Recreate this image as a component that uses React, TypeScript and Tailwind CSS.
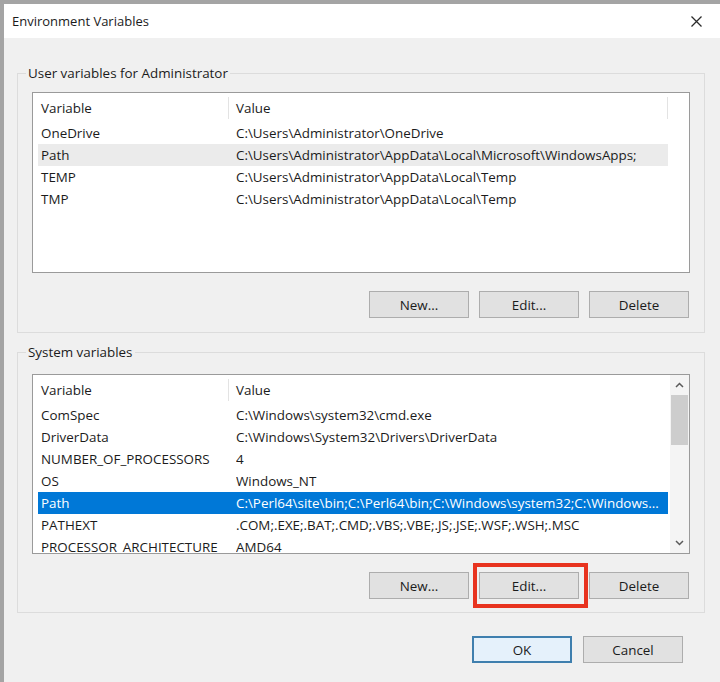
import React from 'react'

const userVars = [
  { name: 'OneDrive', value: 'C:\\Users\\Administrator\\OneDrive' },
  { name: 'Path', value: 'C:\\Users\\Administrator\\AppData\\Local\\Microsoft\\WindowsApps;' },
  { name: 'TEMP', value: 'C:\\Users\\Administrator\\AppData\\Local\\Temp' },
  { name: 'TMP', value: 'C:\\Users\\Administrator\\AppData\\Local\\Temp' },
]

const systemVars = [
  { name: 'ComSpec', value: 'C:\\Windows\\system32\\cmd.exe' },
  { name: 'DriverData', value: 'C:\\Windows\\System32\\Drivers\\DriverData' },
  { name: 'NUMBER_OF_PROCESSORS', value: '4' },
  { name: 'OS', value: 'Windows_NT' },
  { name: 'Path', value: 'C:\\Perl64\\site\\bin;C:\\Perl64\\bin;C:\\Windows\\system32;C:\\Windows...' },
  { name: 'PATHEXT', value: '.COM;.EXE;.BAT;.CMD;.VBS;.VBE;.JS;.JSE;.WSF;.WSH;.MSC' },
  { name: 'PROCESSOR_ARCHITECTURE', value: 'AMD64' },
]

function Button({ label, primary }: { label: string; primary?: boolean }) {
  return (
    <button
      className={
        primary
          ? 'w-[100px] h-[27px] border-2 border-[#3f7fae] bg-[#e5f1fb] text-[#1b1b1b] flex items-center justify-center'
          : 'w-[100px] h-[27px] border border-[#adadad] bg-[#e1e1e1] text-[#1b1b1b] flex items-center justify-center'
      }
    >
      {label}
    </button>
  )
}

function Header({ endLine }: { endLine?: boolean }) {
  return (
    <div className="h-[29px] flex items-center ml-[5px] mr-[2px] shrink-0">
      <div className="w-[190px] pl-[3px]">Variable</div>
      <div className="w-px h-[22px] bg-[#e3e3e3]" />
      <div className="flex-1 pl-[7px]">Value</div>
      {endLine && <div className="w-px h-[22px] bg-[#e3e3e3]" />}
    </div>
  )
}

type Row = { name: string; value: string }

function Rows({ rows, selected, active }: { rows: Row[]; selected: number; active?: boolean }) {
  return (
    <>
      {rows.map((r, i) => {
        const sel = i === selected
        const cls = sel
          ? active
            ? 'bg-[#0078d7] text-white'
            : 'bg-[#ebebeb]'
          : ''
        return (
          <div key={r.name} className={'h-[22px] flex items-center ml-[5px] mr-[2px] shrink-0 whitespace-nowrap ' + cls}>
            <div className="w-[198px] pl-[3px] overflow-hidden">{r.name}</div>
            <div className="flex-1 overflow-hidden">{r.value}</div>
          </div>
        )
      })}
    </>
  )
}

function Chevron({ up }: { up?: boolean }) {
  return (
    <svg width="9" height="6" viewBox="0 0 9 6" fill="none">
      <path
        d={up ? 'M1 5 L4.5 1.5 L8 5' : 'M1 1 L4.5 4.5 L8 1'}
        stroke="#5a5a5a"
        strokeWidth="1.5"
      />
    </svg>
  )
}

export default function App() {
  return (
    <div
      className="w-[720px] h-[682px] bg-[#a4a4a4] pt-[4px] pl-[4px] overflow-hidden text-[13.4px] leading-[18px] text-[#1b1b1b]"
      style={{ fontFamily: '"Open Sans", "Noto Sans", sans-serif' }}
    >
      <div className="h-full flex flex-col bg-[#f0f0f0]">
        {/* Title bar */}
        <div className="h-[34px] shrink-0 bg-white flex items-center justify-between pl-[8px] pr-[18px]">
          <span className="text-[13px]">Environment Variables</span>
          <svg width="11" height="11" viewBox="0 0 11 11">
            <path d="M0.5 0.5 L10.5 10.5 M10.5 0.5 L0.5 10.5" stroke="#2b2b2b" strokeWidth="1.3" />
          </svg>
        </div>

        <div className="flex-1 flex flex-col pl-[13px] pr-[15px] pt-[27px]">
          {/* User variables */}
          <fieldset className="border border-[#dcdcdc] px-[14px] pt-[11px] pb-[14px]">
            <legend className="ml-[-6px] px-[2px] leading-[16px]">User variables for Administrator</legend>
            <div className="h-[181px] border border-[#9a9a9a] bg-white flex overflow-hidden">
              <div className="flex-1 flex flex-col overflow-hidden">
                <Header endLine />
                <Rows rows={userVars} selected={1} />
              </div>
              <div className="w-[19px] shrink-0" />
            </div>
            <div className="mt-[18px] flex justify-end gap-[10px] pr-[1px]">
              <Button label="New..." />
              <Button label="Edit..." />
              <Button label="Delete" />
            </div>
          </fieldset>

          {/* System variables */}
          <fieldset className="mt-[11px] border border-[#dcdcdc] px-[14px] pt-[14px] pb-[13px]">
            <legend className="ml-[-6px] px-[2px] leading-[16px]">System variables</legend>
            <div className="h-[180px] border border-[#9a9a9a] bg-white flex overflow-hidden">
              <div className="flex-1 flex flex-col overflow-hidden">
                <Header />
                <Rows rows={systemVars} selected={4} active />
              </div>
              <div className="w-[19px] shrink-0 bg-[#f4f4f4] flex flex-col items-center">
                <div className="h-[20px] flex items-center justify-center">
                  <Chevron up />
                </div>
                <div className="w-[17px] h-[50px] bg-[#cdcdcd]" />
                <div className="flex-1" />
                <div className="h-[20px] flex items-center justify-center">
                  <Chevron />
                </div>
              </div>
            </div>
            <div className="mt-[18px] flex justify-end gap-[10px] pr-[1px]">
              <Button label="New..." />
              <div className="relative">
                <Button label="Edit..." />
                <div className="absolute left-[-6px] right-[-9px] top-[-9px] bottom-[-9px] border-4 border-[#e8331f] pointer-events-none" />
              </div>
              <Button label="Delete" />
            </div>
          </fieldset>

          {/* OK / Cancel */}
          <div className="mt-[23px] flex justify-end gap-[11px] pr-[22px]">
            <Button label="OK" primary />
            <Button label="Cancel" />
          </div>
        </div>
      </div>
    </div>
  )
}
